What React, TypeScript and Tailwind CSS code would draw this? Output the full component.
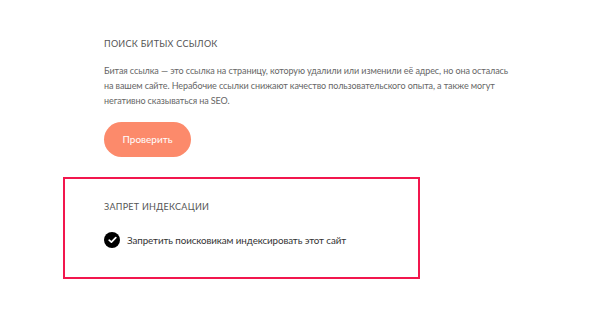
import React from 'react';

const font = { fontFamily: 'Lato, "Open Sans", sans-serif' };

const CheckIcon: React.FC = () => (
  <span className="flex h-4 w-4 shrink-0 items-center justify-center rounded-full bg-black">
    <svg width="9" height="8" viewBox="0 0 9 8" fill="none">
      <path d="M1.2 4.2 L3.4 6.2 L7.8 1.6" stroke="#fff" strokeWidth="1.7" strokeLinecap="round" strokeLinejoin="round" />
    </svg>
  </span>
);

const App: React.FC = () => {
  return (
    <div className="h-[318px] w-[600px] bg-white" style={font}>
      <div className="pl-[63px] pt-[37px]">
        {/* поиск битых ссылок */}
        <div className="ml-[41px] w-[440px]">
          <h2 className="text-[9px] leading-[14px] tracking-[0.03em] uppercase text-[#555]">Поиск битых ссылок</h2>
          <p className="mt-[12px] whitespace-nowrap text-[9px] leading-[15px] tracking-[-0.01em] text-[#666]">
            Битая ссылка — это ссылка на страницу, которую удалили или изменили её адрес, но она осталась
            <br />
            на вашем сайте. Нерабочие ссылки снижают качество пользовательского опыта, а также могут
            <br />
            негативно сказываться на SEO.
          </p>
          <button className="mt-[14px] h-[35px] w-[87px] rounded-full bg-[#fc8a6b] text-[10px] text-white">Проверить</button>
        </div>

        {/* запрет индексации */}
        <div className="mt-[20px] h-[102px] w-[357px] border-2 border-[#f2174d] pl-[39px] pt-[21px]">
          <h2 className="text-[9px] leading-[14px] tracking-[0.03em] uppercase text-[#555]">Запрет индексации</h2>
          <label className="mt-[18px] flex items-center gap-[7px]">
            <CheckIcon />
            <span className="text-[9.8px] tracking-[-0.01em] text-[#333]">Запретить поисковикам индексировать этот сайт</span>
          </label>
        </div>
      </div>
    </div>
  );
};

export default App;
